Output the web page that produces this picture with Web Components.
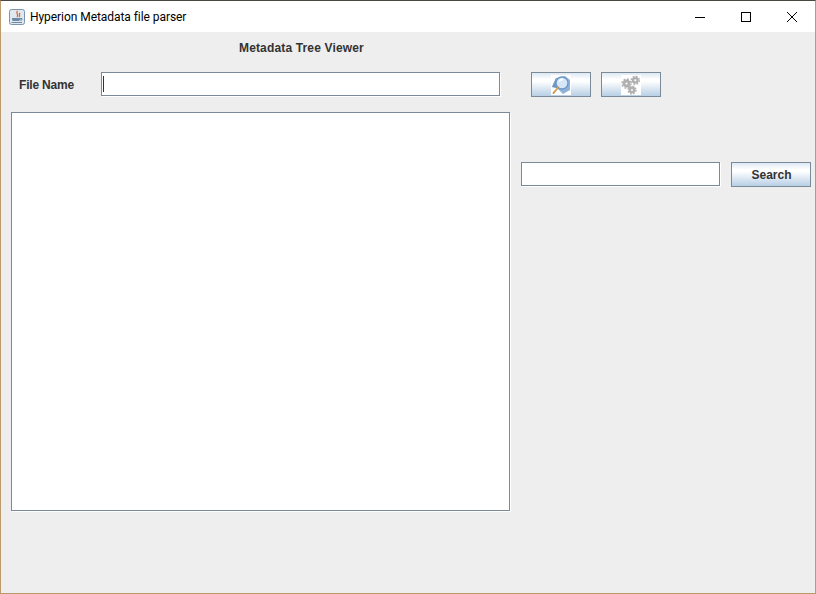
<!DOCTYPE html>
<html>
<head>
<meta charset="utf-8">
<title>Hyperion Metadata file parser</title>
<style>
  html, body { margin: 0; padding: 0; background: #eeeeee; overflow: hidden; }
</style>
</head>
<body>
<hyp-window>
  <hyp-titlebar slot="title">Hyperion Metadata file parser</hyp-titlebar>
  <hyp-heading>Metadata Tree Viewer</hyp-heading>
  <hyp-file-row>
    <hyp-label slot="label">File Name</hyp-label>
    <hyp-field slot="field" width="399" has-caret="true"></hyp-field>
    <hyp-button slot="actions" width="60">
      <svg width="20" height="20" viewBox="0 0 20 20">
        <rect width="20" height="20" fill="#fff"/>
        <path d="M1 12 L5 3 L14 1 L19 5 L19 15 L12 19 L6 13 Z" fill="#8fb2d8"/>
        <path d="M5 3 L8 12 L6 13 L1 12 Z" fill="#7098c4"/>
        <circle cx="11" cy="8" r="6" fill="#d6e7f7" stroke="#6f98c8" stroke-width="1.300"/>
        <path d="M8 6.500 A4 4 0 0 1 12 4.500" fill="none" stroke="#fff" stroke-width="1.400"/>
        <path d="M7 12.500 L2.500 18" stroke="#c98a3c" stroke-width="1.800" stroke-linecap="round"/>
        <path d="M6.600 12.400 L3 16.800" stroke="#f2cf94" stroke-width="0.700"/>
      </svg>
    </hyp-button>
    <hyp-button slot="actions" width="60">
      <svg width="20" height="20" viewBox="0 0 20 20">
        <rect width="20" height="20" fill="#fff"/>
        <g fill="none" stroke="#b0b0b0">
          <circle cx="5.500" cy="8.500" r="2.500" stroke-width="2.800"/>
          <circle cx="5.500" cy="8.500" r="4.500" stroke-width="1.400" stroke-dasharray="1.900 1.630"/>
          <circle cx="14.300" cy="5.300" r="2.300" stroke-width="2.500"/>
          <circle cx="14.300" cy="5.300" r="4.100" stroke-width="1.300" stroke-dasharray="1.800 1.420"/>
          <circle cx="11" cy="15" r="2.200" stroke-width="2.500"/>
          <circle cx="11" cy="15" r="4" stroke-width="1.300" stroke-dasharray="1.800 1.340"/>
        </g>
      </svg>
    </hyp-button>
  </hyp-file-row>
  <hyp-main-row>
    <hyp-tree-panel slot="tree"></hyp-tree-panel>
    <hyp-field slot="search" width="199"></hyp-field>
    <hyp-button slot="search" width="80">Search</hyp-button>
  </hyp-main-row>
</hyp-window>

<script>
class HypWindow extends HTMLElement {
  constructor() {
    super();
    this.attachShadow({ mode: 'open' });
    this.shadowRoot.innerHTML = `
      <style>
        :host {
          display: block;
          box-sizing: border-box;
          width: 816px;
          height: 594px;
          background: #eeeeee;
          border: 1px solid #bd9a6c;
          border-top-color: #4a4640;
          font-family: "Liberation Sans", Arial, sans-serif;
          overflow: hidden;
        }
      </style>
      <slot name="title"></slot>
      <slot></slot>
    `;
  }
}

class HypTitlebar extends HTMLElement {
  constructor() {
    super();
    this.attachShadow({ mode: 'open' });
    this.shadowRoot.innerHTML = `
      <style>
        :host {
          display: flex;
          align-items: center;
          height: 31px;
          background: #fff;
          color: #000;
          font: 12px Roboto, "Open Sans", sans-serif;
          letter-spacing: -0.06px;
        }
        .app-icon { margin: 0 5px 0 8px; flex: none; display: block; }
        .text { flex: 1; white-space: nowrap; }
        .controls { display: flex; height: 31px; }
        .controls div {
          width: 46px;
          display: flex;
          align-items: center;
          justify-content: center;
        }
        svg { display: block; }
      </style>
      <svg class="app-icon" width="16" height="16" viewBox="0 0 16 16">
        <rect x="0.500" y="0.500" width="15" height="15" rx="2" fill="#dfe7ef" stroke="#7b93ab"/>
        <path d="M8.500 2 C6 4 10.500 5 8 8 M11 4 C9.500 5.500 11.500 6.500 10 8" fill="none" stroke="#d9652f" stroke-width="1.300"/>
        <path d="M3 9 H11 V10.500 C11 11.500 10 12 8.500 12 H5.500 C4 12 3 11.500 3 10.500 Z" fill="#6c8aa6"/>
        <path d="M11 9.500 H13 V11 H11" fill="none" stroke="#6c8aa6"/>
        <path d="M2.500 13.500 H13" stroke="#6c8aa6" stroke-width="1"/>
      </svg>
      <span class="text"><slot></slot></span>
      <div class="controls">
        <div><svg width="12" height="12" viewBox="0 0 12 12"><path d="M1 6.500 H11" stroke="#000"/></svg></div>
        <div><svg width="12" height="12" viewBox="0 0 12 12"><rect x="1.500" y="1.500" width="9" height="9" fill="none" stroke="#000"/></svg></div>
        <div><svg width="12" height="12" viewBox="0 0 12 12"><path d="M1 1 L11 11 M11 1 L1 11" stroke="#000"/></svg></div>
      </div>
    `;
  }
}

class HypHeading extends HTMLElement {
  constructor() {
    super();
    this.attachShadow({ mode: 'open' });
    this.shadowRoot.innerHTML = `
      <style>
        :host {
          display: block;
          height: 15px;
          line-height: 15px;
          margin-top: 9px;
          padding-left: 238px;
          font-size: 12px;
          font-weight: bold;
          letter-spacing: 0.15px;
          color: #333333;
        }
      </style>
      <slot></slot>
    `;
  }
}

class HypLabel extends HTMLElement {
  constructor() {
    super();
    this.attachShadow({ mode: 'open' });
    this.shadowRoot.innerHTML = `
      <style>
        :host {
          display: block;
          font-size: 12px;
          font-weight: bold;
          letter-spacing: -0.2px;
          color: #333333;
          white-space: nowrap;
        }
      </style>
      <slot></slot>
    `;
  }
}

class HypField extends HTMLElement {
  constructor() {
    super();
    this.attachShadow({ mode: 'open' });
    this.shadowRoot.innerHTML = `
      <style>
        :host {
          display: block;
          position: relative;
          box-sizing: border-box;
          height: 24px;
          background: #fff;
          border: 1px solid #7a8a99;
          box-shadow: 1px 1px 0 #fff;
        }
        :host([has-caret])::after {
          content: "";
          position: absolute;
          left: 1px;
          top: 3px;
          width: 1px;
          height: 16px;
          background: #333;
        }
      </style>
    `;
  }

  connectedCallback() {
    this.style.width = this.getAttribute('width') + 'px';
  }
}

class HypButton extends HTMLElement {
  constructor() {
    super();
    this.attachShadow({ mode: 'open' });
    this.shadowRoot.innerHTML = `
      <style>
        :host {
          display: flex;
          align-items: center;
          justify-content: center;
          box-sizing: border-box;
          height: 25px;
          border: 1px solid #7a8a99;
          background: linear-gradient(#dde8f3 0%, #ffffff 28%, #ffffff 36%, #b8cfe5 100%);
          font-size: 12px;
          font-weight: bold;
          color: #333333;
          text-indent: 1px;
        }
        ::slotted(svg) { display: block; }
      </style>
      <slot></slot>
    `;
  }

  connectedCallback() {
    this.style.width = this.getAttribute('width') + 'px';
  }
}

class HypFileRow extends HTMLElement {
  constructor() {
    super();
    this.attachShadow({ mode: 'open' });
    this.shadowRoot.innerHTML = `
      <style>
        :host {
          display: flex;
          align-items: flex-start;
          margin-top: 16px;
          padding-left: 18px;
        }
        .label { width: 82px; padding-top: 6px; }
        .actions { display: flex; gap: 10px; margin-left: 31px; }
      </style>
      <div class="label"><slot name="label"></slot></div>
      <slot name="field"></slot>
      <div class="actions"><slot name="actions"></slot></div>
    `;
  }
}

class HypTreePanel extends HTMLElement {
  constructor() {
    super();
    this.attachShadow({ mode: 'open' });
    this.shadowRoot.innerHTML = `
      <style>
        :host {
          display: block;
          box-sizing: border-box;
          width: 499px;
          height: 399px;
          background: #fff;
          border: 1px solid #7a8a99;
          box-shadow: 1px 1px 0 #fff;
        }
      </style>
    `;
  }
}

class HypMainRow extends HTMLElement {
  constructor() {
    super();
    this.attachShadow({ mode: 'open' });
    this.shadowRoot.innerHTML = `
      <style>
        :host {
          display: flex;
          align-items: flex-start;
          margin-top: 15px;
          padding-left: 10px;
        }
        .search {
          display: flex;
          align-items: flex-start;
          gap: 11px;
          margin: 50px 0 0 11px;
        }
      </style>
      <slot name="tree"></slot>
      <div class="search"><slot name="search"></slot></div>
    `;
  }
}

customElements.define('hyp-window', HypWindow);
customElements.define('hyp-titlebar', HypTitlebar);
customElements.define('hyp-heading', HypHeading);
customElements.define('hyp-label', HypLabel);
customElements.define('hyp-field', HypField);
customElements.define('hyp-button', HypButton);
customElements.define('hyp-file-row', HypFileRow);
customElements.define('hyp-tree-panel', HypTreePanel);
customElements.define('hyp-main-row', HypMainRow);
</script>
</body>
</html>
